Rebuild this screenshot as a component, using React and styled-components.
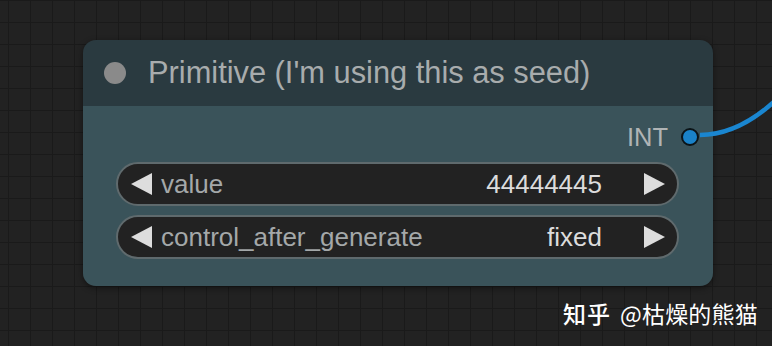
import React from "react";
import styled, { createGlobalStyle } from "styled-components";

const Global = createGlobalStyle`
  html, body { margin: 0; padding: 0; }
  body {
    width: 772px;
    height: 346px;
    overflow: hidden;
    font-family: "Liberation Sans", Arial, sans-serif;
  }
`;

const Canvas = styled.div`
  position: relative;
  width: 772px;
  height: 346px;
  box-sizing: border-box;
  padding: 40px 0 0 83px;
  background-color: #222222;
  background-image:
    linear-gradient(to right, #1a1a1a 1px, transparent 1px),
    linear-gradient(to bottom, #1a1a1a 1px, transparent 1px);
  background-size: 22px 22px;
  background-position: 8px 0px;
  overflow: hidden;
`;

const Node = styled.div`
  width: 630px;
  border-radius: 13px;
  overflow: hidden;
  display: flex;
  flex-direction: column;
  box-shadow: 0 2px 6px rgba(0, 0, 0, 0.45);
`;

const TitleBar = styled.div`
  height: 66px;
  background: #2a3a40;
  display: flex;
  align-items: center;
  gap: 22px;
  padding-left: 21px;
`;

const TitleDot = styled.span`
  width: 22px;
  height: 22px;
  border-radius: 50%;
  background: #8a8a8a;
  flex: none;
`;

const Title = styled.span`
  font-size: 30.8px;
  color: #a8acad;
  white-space: nowrap;
`;

const Body = styled.div`
  background: #3a535a;
  display: flex;
  flex-direction: column;
  padding: 16px 34px 27px 33px;
  gap: 9px;
`;

const OutputRow = styled.div`
  height: 30px;
  display: flex;
  justify-content: flex-end;
  align-items: center;
  gap: 13px;
  margin-right: -20px;
  margin-bottom: 1px;
`;

const OutputLabel = styled.span`
  font-size: 25.5px;
  color: #b0b4b5;
`;

const OutputSlot = styled.span`
  width: 14px;
  height: 14px;
  border-radius: 50%;
  background: #1a82c8;
  border: 2px solid #0b1418;
  flex: none;
`;

const Widget = styled.div`
  height: 44px;
  box-sizing: border-box;
  border-radius: 22px;
  background: #222222;
  border: 2px solid #5f6a6d;
  display: flex;
  align-items: center;
  padding: 0 11px 0 12px;
  font-size: 26px;
`;

const Arrow = styled.svg`
  width: 24px;
  height: 24px;
  flex: none;
`;

const Label = styled.span`
  color: #a4a8a9;
  margin-left: 7px;
  flex: 1;
  white-space: nowrap;
`;

const Value = styled.span`
  color: #dcdcdc;
  margin-right: 40px;
  white-space: nowrap;
`;

const Wire = styled.svg`
  position: absolute;
  left: 0;
  top: 0;
  pointer-events: none;
`;

const Watermark = styled.div`
  position: absolute;
  left: 563px;
  top: 298px;
  display: flex;
  gap: 9px;
  font-family: "Noto Sans CJK SC", "Liberation Sans", sans-serif;
  font-size: 23px;
  line-height: 30px;
  color: #ffffff;
  white-space: nowrap;
`;

const Brand = styled.span`
  font-weight: 500;
  letter-spacing: 1px;
`;

const Handle = styled.span`
  letter-spacing: 0.2px;
`;

const LeftArrow = () => (
  <Arrow viewBox="0 0 24 24">
    <polygon points="1,12 22,1 22,23" fill="#dddddd" />
  </Arrow>
);

const RightArrow = () => (
  <Arrow viewBox="0 0 24 24">
    <polygon points="23,12 2,1 2,23" fill="#dddddd" />
  </Arrow>
);

const widgets = [
  { label: "value", value: "44444445" },
  { label: "control_after_generate", value: "fixed" },
];

export default function App() {
  return (
    <>
      <Global />
      <Canvas>
        <Wire width="772" height="346" viewBox="0 0 772 346">
          <path
            d="M700 135 C 725 135, 750 124, 776 100"
            stroke="#1a86d0"
            strokeWidth="4.5"
            fill="none"
          />
        </Wire>
        <Node>
          <TitleBar>
            <TitleDot />
            <Title>Primitive (I'm using this as seed)</Title>
          </TitleBar>
          <Body>
            <OutputRow>
              <OutputLabel>INT</OutputLabel>
              <OutputSlot />
            </OutputRow>
            {widgets.map((w) => (
              <Widget key={w.label}>
                <LeftArrow />
                <Label>{w.label}</Label>
                <Value>{w.value}</Value>
                <RightArrow />
              </Widget>
            ))}
          </Body>
        </Node>
        <Watermark>
          <Brand>知乎</Brand>
          <Handle>@枯燥的熊猫</Handle>
        </Watermark>
      </Canvas>
    </>
  );
}
